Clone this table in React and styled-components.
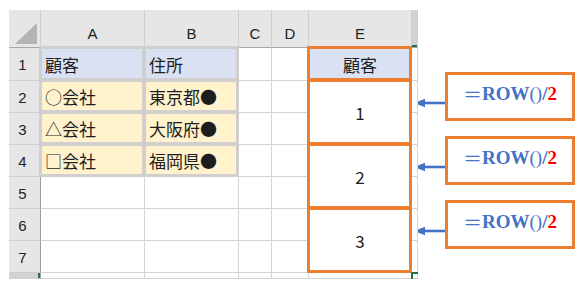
import React from 'react';
import styled, { createGlobalStyle, css } from 'styled-components';

const GlobalStyle = createGlobalStyle`
  body {
    margin: 0;
    background: #fff;
  }
`;

const ORANGE = '#ed7d31';
const BLUE = '#4472c4';
const GRID = '#d4d4d4';
const EXCEL_GREEN = '#217346';

const Page = styled.div`
  display: flex;
  align-items: flex-start;
  width: 586px;
  height: 288px;
  overflow: hidden;
`;

const Sheet = styled.div`
  display: grid;
  grid-template-columns: 32px 104px 94px 33px 37px 103px 6px;
  grid-template-rows: 38px 33px repeat(6, 32px) 6px;
  margin: 10px 0 0 9px;
  overflow: hidden;
  font-family: 'Noto Sans CJK JP', sans-serif;
`;

const Corner = styled.div`
  position: relative;
  background: #e6e6e6;
  border-right: 1px solid #cfcfcf;
  border-bottom: 1px solid #a6a6a6;

  &::after {
    content: '';
    position: absolute;
    right: 3px;
    bottom: 3px;
    width: 22px;
    height: 21px;
    background: #b4b4b4;
    clip-path: polygon(100% 0, 100% 100%, 0 100%);
  }
`;

const ColHead = styled.div`
  display: flex;
  justify-content: center;
  align-items: flex-start;
  padding-top: 16px;
  box-sizing: border-box;
  background: ${({ selected }) => (selected ? '#d2d2d2' : '#e6e6e6')};
  border-right: 1px solid #cfcfcf;
  border-bottom: 1px solid #a6a6a6;
  box-shadow: ${({ selected }) => (selected ? `inset 0 -2px 0 ${EXCEL_GREEN}` : 'none')};
  font-family: 'Liberation Sans', Arial, sans-serif;
  font-size: 15px;
  line-height: 15px;
  color: #222;
`;

const RowHead = styled.div`
  display: flex;
  justify-content: center;
  align-items: center;
  padding: 1px 4px 0 0;
  box-sizing: border-box;
  background: ${({ selected }) => (selected ? '#d2d2d2' : '#e6e6e6')};
  border-right: 1px solid #9e9e9e;
  border-bottom: 1px solid #cfcfcf;
  box-shadow: ${({ selected }) => (selected ? `inset -2px 0 0 ${EXCEL_GREEN}` : 'none')};
  font-family: 'Liberation Sans', Arial, sans-serif;
  font-size: 15px;
  line-height: 15px;
  color: #222;
`;

const fills = {
  blue: '#d9e1f2',
  yellow: '#fff2cc',
};

const frames = {
  grey: { color: '#d0cece', layer: 1 },
  orange: { color: ORANGE, layer: 2 },
};

const Cell = styled.div`
  position: relative;
  display: flex;
  align-items: center;
  justify-content: ${({ center }) => (center ? 'center' : 'flex-start')};
  padding-left: ${({ center }) => (center ? '0' : '4px')};
  box-sizing: border-box;
  grid-row: span ${({ span }) => span || 1};
  background: ${({ fill }) => fills[fill] || '#fff'};
  border-right: 1px solid ${GRID};
  border-bottom: 1px solid ${GRID};
  font-size: 17px;
  line-height: 1;
  color: #1e1e1e;

  ${({ frame }) =>
    frame &&
    css`
      &::after {
        content: '';
        position: absolute;
        top: -2px;
        left: -2px;
        right: -1px;
        bottom: -1px;
        border: 3px solid ${frames[frame].color};
        z-index: ${frames[frame].layer};
        pointer-events: none;
      }
    `}

  ${({ active }) =>
    active &&
    css`
      &::before {
        content: '';
        position: absolute;
        top: -1px;
        left: -1px;
        width: 8px;
        height: 8px;
        border-top: 2px solid ${EXCEL_GREEN};
        border-left: 2px solid ${EXCEL_GREEN};
        z-index: 3;
      }
    `}
`;

const Notes = styled.div`
  display: flex;
  flex-direction: column;
  gap: 15px;
  padding-top: 72px;
  margin-left: -4px;
`;

const Callout = styled.div`
  display: flex;
  align-items: flex-start;
`;

const Arrow = styled.svg`
  display: block;
  flex: none;
  margin-top: 25px;
`;

const FormulaBox = styled.div`
  display: flex;
  align-items: center;
  justify-content: center;
  width: 130px;
  height: 49px;
  padding-bottom: 6px;
  box-sizing: border-box;
  border: 3px solid ${ORANGE};
  background: #fff;
  font-family: 'Liberation Serif', 'Times New Roman', serif;
  font-weight: bold;
  font-size: 19px;
  line-height: 1;
  color: ${BLUE};
  white-space: nowrap;
`;

const Thin = styled.span`
  font-family: ${({ cjk }) => (cjk ? "'Noto Sans CJK JP', sans-serif" : 'inherit')};
  font-weight: normal;
`;

const Red = styled.span`
  color: #ff0000;
`;

const sheetRows = [
  { a: { text: '顧客', fill: 'blue' }, b: { text: '住所', fill: 'blue' }, e: { text: '顧客', fill: 'blue' } },
  { a: { text: '○会社', fill: 'yellow' }, b: { text: '東京都●', fill: 'yellow' }, e: { text: '1', span: 2 } },
  { a: { text: '△会社', fill: 'yellow' }, b: { text: '大阪府●', fill: 'yellow' } },
  { a: { text: '□会社', fill: 'yellow' }, b: { text: '福岡県●', fill: 'yellow' }, e: { text: '2', span: 2 } },
  {},
  { e: { text: '3', span: 2 } },
  {},
];

const ArrowIcon = () => (
  <Arrow width="31" height="12" viewBox="0 0 31 12">
    <line x1="9" y1="6" x2="31" y2="6" stroke={BLUE} strokeWidth="2.6" />
    <polygon points="0,6 11,1.8 11,10.2" fill={BLUE} />
  </Arrow>
);

const App = () => (
  <>
    <GlobalStyle />
    <Page>
      <Sheet>
        <Corner />
        {['A', 'B', 'C', 'D', 'E'].map(letter => (
          <ColHead key={letter}>{letter}</ColHead>
        ))}
        <ColHead selected />

        {sheetRows.map((row, i) => (
          <React.Fragment key={i}>
            <RowHead>{i + 1}</RowHead>
            <Cell fill={row.a && row.a.fill} frame={row.a ? 'grey' : undefined}>
              {row.a && row.a.text}
            </Cell>
            <Cell fill={row.b && row.b.fill} frame={row.b ? 'grey' : undefined}>
              {row.b && row.b.text}
            </Cell>
            <Cell />
            <Cell />
            {row.e && (
              <Cell center fill={row.e.fill} span={row.e.span} frame="orange">
                {row.e.text}
              </Cell>
            )}
            <Cell />
          </React.Fragment>
        ))}

        <RowHead selected />
        <Cell />
        <Cell />
        <Cell />
        <Cell />
        <Cell />
        <Cell active />
      </Sheet>

      <Notes>
        {[0, 1, 2].map(n => (
          <Callout key={n}>
            <ArrowIcon />
            <FormulaBox>
              <Thin cjk>＝</Thin>ROW<Thin>()</Thin>/<Red>2</Red>
            </FormulaBox>
          </Callout>
        ))}
      </Notes>
    </Page>
  </>
);

export default App;
